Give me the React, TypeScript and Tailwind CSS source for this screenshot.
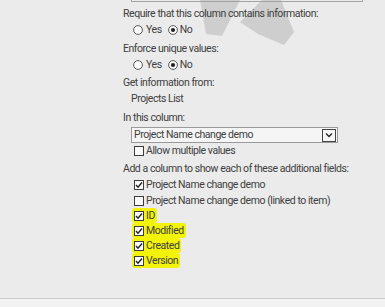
import type { ReactNode } from 'react'

const font = { fontFamily: 'Roboto, "Noto Sans", sans-serif' }

function Radio({ checked }: { checked?: boolean }) {
  return (
    <svg width="10" height="10" viewBox="0 0 10 10" className="shrink-0">
      <circle cx="5" cy="5" r="4.4" fill="#fbfbfb" stroke="#4a4a4a" strokeWidth="0.9" />
      {checked && <circle cx="5" cy="5" r="2.1" fill="#222" />}
    </svg>
  )
}

function Check({ checked }: { checked?: boolean }) {
  return (
    <svg width="10" height="10" viewBox="0 0 10 10" className="shrink-0">
      <rect x="0.5" y="0.5" width="9" height="9" fill="#fbfbfb" stroke="#3c3c3c" strokeWidth="1" />
      {checked && <path d="M2 5.1 L4 7.2 L8 2.5" fill="none" stroke="#222" strokeWidth="1.4" />}
    </svg>
  )
}

function Row({ children, className = '' }: { children: ReactNode, className?: string }) {
  return <div className={`flex h-[16px] items-center leading-[16px] ${className}`}>{children}</div>
}

function CheckRow({ label, checked, mark }: { label: string, checked?: boolean, mark?: boolean }) {
  return (
    <div className="flex h-[15px] items-center pl-[9px]">
      <div className={`flex h-[15px] items-center gap-[2px] pr-[2px] ${mark ? 'rounded-[3px] bg-[#f2f20a] pl-[2px]' : 'pl-[2px]'}`}>
        <Check checked={checked} />
        <span>{label}</span>
      </div>
    </div>
  )
}

function YesNo() {
  return (
    <Row className="pl-[10px]">
      <Radio />
      <span className="ml-[3px]">Yes</span>
      <span className="ml-[6px]"><Radio checked /></span>
      <span className="ml-[2px]">No</span>
    </Row>
  )
}

export default function App() {
  return (
    <div className="relative h-[307px] w-[385px] overflow-hidden bg-[#ebebeb] text-[10.5px] tracking-[-0.45px] text-[#404040]" style={font}>
      <svg className="absolute left-0 top-0" width="385" height="60" viewBox="0 0 385 60">
        <polygon points="200,0 240,0 222,36 206,34" fill="#cecece" />
        <polygon points="262,0 281,0 294,32 284,45 258,34 240,22 250,12" fill="#cecece" />
      </svg>
      <div className="relative flex flex-col pl-[123px]">
        <div className="ml-[8px] h-[2px] w-[232px] border-x border-b border-[#a3a3a3]" />
        <Row className="mt-[4px]">Require that this column contains information:</Row>
        <YesNo />
        <Row className="mt-[3px]">Enforce unique values:</Row>
        <YesNo />
        <Row className="mt-[2px]">Get information from:</Row>
        <Row className="pl-[8px]">Projects List</Row>
        <Row className="mt-[3px]">In this column:</Row>
        <div className="ml-[8px] mt-[1px] flex h-[16px] w-[207px] items-center border border-[#9a9a9a] bg-[#f5f5f5] pl-[2px]">
          <span className="flex-1">Project Name change demo</span>
          <div className="mr-[1px] flex h-[13px] w-[14px] items-center justify-center border border-[#444] bg-[#f6f6f6]">
            <svg width="8" height="6" viewBox="0 0 8 6">
              <path d="M1 1.5 L4 4.5 L7 1.5" fill="none" stroke="#222" strokeWidth="1.3" />
            </svg>
          </div>
        </div>
        <div className="flex h-[16px] items-center gap-[2px] pl-[11px]">
          <Check />
          <span>Allow multiple values</span>
        </div>
        <Row className="mt-[2px]">Add a column to show each of these additional fields:</Row>
        <div className="flex h-[16px] items-center gap-[2px] pl-[11px]">
          <Check checked />
          <span>Project Name change demo</span>
        </div>
        <div className="flex h-[15px] items-center gap-[2px] pl-[11px]">
          <Check />
          <span>Project Name change demo (linked to item)</span>
        </div>
        <CheckRow label="ID" checked mark />
        <CheckRow label="Modified" checked mark />
        <CheckRow label="Created" checked mark />
        <CheckRow label="Version" checked mark />
      </div>
      <div className="absolute bottom-0 left-0 h-[9px] w-full border-t border-[#cbcbcb] bg-[#f2f2f2]" />
    </div>
  )
}
